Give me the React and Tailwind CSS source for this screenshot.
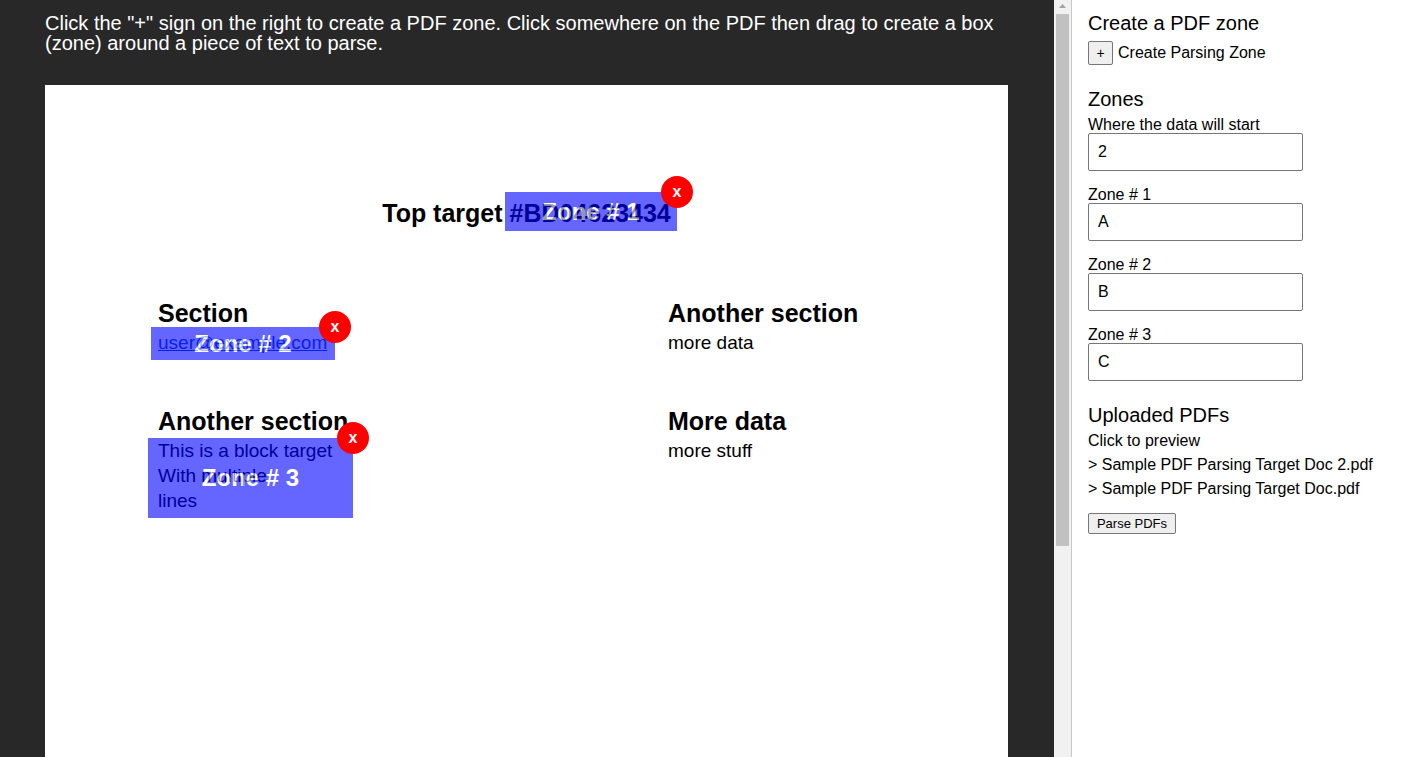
import { useState } from "react";

const documentZones = [
  { id: 1, box: "left-[460px] top-[107px] h-[39px] w-[172px]" },
  { id: 2, box: "left-[106px] top-[242px] h-[33px] w-[184px]" },
  { id: 3, box: "left-[103px] top-[353px] h-[80px] w-[205px]" },
];

const files = ["Sample PDF Parsing Target Doc 2.pdf", "Sample PDF Parsing Target Doc.pdf"];

function Zone({ id, box }) {
  return (
    <div className={`absolute ${box}`}>
      <div className="flex h-full items-center justify-center bg-[#0000ff] text-2xl font-bold text-white opacity-60">
        Zone # {id}
      </div>
      <button
        type="button"
        aria-label={`Remove zone ${id}`}
        className="absolute -top-4 -right-4 size-8 rounded-full bg-[#ff0000] text-base leading-8 font-bold text-white"
      >
        x
      </button>
    </div>
  );
}

function Block({ title, children }) {
  return (
    <section>
      <h2 className="text-[25px] leading-[34px] font-bold">{title}</h2>
      <div className="text-[19px] leading-[25px]">{children}</div>
    </section>
  );
}

function Field({ id, label, initial }) {
  const [value, setValue] = useState(initial);
  return (
    <div className="mb-4 flex flex-col items-start">
      <label htmlFor={id} className="leading-4">{label}</label>
      <input
        id={id}
        value={value}
        onChange={(e) => setValue(e.target.value)}
        className="h-[38px] w-[215px] rounded-xs border border-[#767676] bg-white px-[9px]"
      />
    </div>
  );
}

function Scrollbar() {
  return (
    <div aria-hidden="true" className="flex w-[17px] shrink-0 flex-col items-center bg-[#f1f1f1]">
      <svg viewBox="0 0 17 14" className="h-3.5 w-[17px] shrink-0">
        <path d="M5 8 L8.5 4 L12 8 Z" fill="#a3a3a3" />
      </svg>
      <div className="h-[532px] w-[13px] bg-[#c1c1c1]" />
    </div>
  );
}

export default function App() {
  return (
    <div className="flex h-screen overflow-hidden bg-white font-['Liberation_Sans',Arial,sans-serif] text-base text-black">
      <main className="min-w-0 flex-1 overflow-hidden bg-[#282828] pt-[13px] pr-[46px] pl-[45px]">
        <p className="text-xl leading-5 text-white">
          Click the "+" sign on the right to create a PDF zone. Click somewhere on the PDF then drag to create a box
          (zone) around a piece of text to parse.
        </p>
        <article className="relative mt-8 min-h-screen bg-white pt-[111px]">
          <h1 className="text-center text-[25px] leading-[34px] font-bold">Top target #BD04623434</h1>
          <div className="grid grid-cols-[510px_1fr] gap-y-[49px] pt-[66px] pl-[113px]">
            <Block title="Section">
              <a href="mailto:user@example.com" className="text-[#1155cc] underline">user@example.com</a>
            </Block>
            <Block title="Another section">more data</Block>
            <Block title="Another section">
              This is a block target
              <br />
              With multiple
              <br />
              lines
            </Block>
            <Block title="More data">more stuff</Block>
          </div>
          {documentZones.map((zone) => (
            <Zone key={zone.id} {...zone} />
          ))}
        </article>
      </main>
      <Scrollbar />
      <aside className="w-[335px] shrink-0 border-l border-[#c8c8c8] px-4 pt-3">
        <h2 className="text-xl leading-[22px]">Create a PDF zone</h2>
        <div className="mt-[7px] flex items-center gap-[5px]">
          <button
            id="create-zone"
            type="button"
            className="h-6 w-[25px] rounded-xs border border-[#767676] bg-[#efefef] text-sm"
          >
            +
          </button>
          <label htmlFor="create-zone">Create Parsing Zone</label>
        </div>
        <h2 className="mt-[23px] mb-[7px] text-xl leading-[22px]">Zones</h2>
        <Field id="start" label="Where the data will start" initial="2" />
        <Field id="zone-1" label="Zone # 1" initial="A" />
        <Field id="zone-2" label="Zone # 2" initial="B" />
        <Field id="zone-3" label="Zone # 3" initial="C" />
        <h2 className="mt-[23px] text-xl leading-[22px]">Uploaded PDFs</h2>
        <p className="mt-[3px] leading-6">Click to preview</p>
        <ul>
          {files.map((file) => (
            <li key={file} className="leading-6">
              <a href="#preview">&gt; {file}</a>
            </li>
          ))}
        </ul>
        <button
          type="button"
          className="mt-3 h-[21px] w-[88px] rounded-xs border border-[#767676] bg-[#efefef] text-[13px] leading-[19px]"
        >
          Parse PDFs
        </button>
      </aside>
    </div>
  );
}
